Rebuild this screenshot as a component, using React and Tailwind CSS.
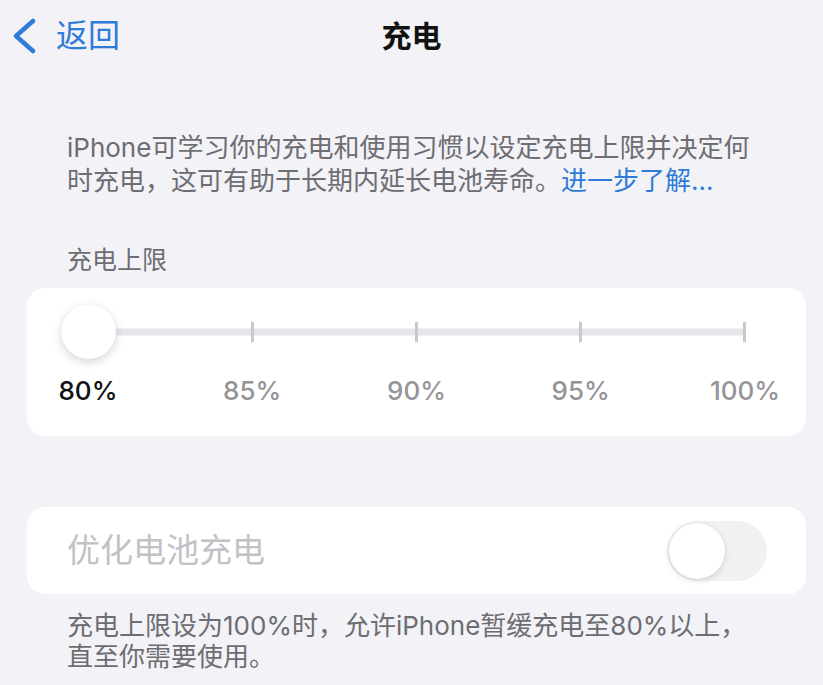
import React from "react"

const FONT = "font-['Inter','Noto_Sans_CJK_SC',sans-serif]"

const Chevron = () => (
  <svg width="26" height="36" viewBox="0 0 26 36" className="shrink-0">
    <path
      d="M21 3 L4 18 L21 33"
      stroke="currentColor"
      strokeWidth="4.5"
      fill="none"
      strokeLinecap="round"
      strokeLinejoin="round"
    />
  </svg>
)

const steps = ["80%", "85%", "90%", "95%", "100%"]

const LimitSlider = () => (
  <div className="rounded-[18px] bg-white px-[21px] pt-[16px] pb-[29px]">
    <div className="relative mx-[13px] h-[55px]">
      {/* track */}
      <div className="absolute inset-x-[27px] top-1/2 h-[7px] -translate-y-1/2 rounded-full bg-[#e5e5ea]" />
      {/* ticks */}
      <div className="absolute inset-x-[26px] top-1/2 flex -translate-y-1/2 items-center justify-between">
        {steps.map((s) => (
          <span key={s} className="h-[21px] w-[3px] rounded-full bg-[#c8c8cd]" />
        ))}
      </div>
      {/* thumb */}
      <div className="absolute left-0 top-0 h-[55px] w-[55px] rounded-full bg-white shadow-[0_3px_10px_rgba(0,0,0,0.16),0_0_1px_rgba(0,0,0,0.08)]" />
    </div>
    <div className="mt-[16px] flex justify-between">
      {steps.map((s, i) => (
        <span
          key={s}
          className={
            "w-[80px] text-center text-[26px] font-medium leading-[32px] " +
            (i === 0 ? "text-[#111111]" : "text-[#949499]")
          }
        >
          {s}
        </span>
      ))}
    </div>
  </div>
)

const Toggle = () => (
  <div className="flex h-[60px] w-[100px] items-center rounded-full bg-[#f1f1f4] p-[2px]">
    <div className="h-[56px] w-[56px] rounded-full bg-white shadow-[0_2px_6px_rgba(0,0,0,0.12),0_0_1px_rgba(0,0,0,0.1)]" />
  </div>
)

export default function App() {
  return (
    <div className={"min-h-screen w-full bg-[#f2f2f7] " + FONT}>
      <header className="grid h-[72px] grid-cols-[1fr_auto_1fr] items-center px-3">
        <div className="flex items-center gap-[18px] text-[#2f7bd8]">
          <Chevron />
          <span className="text-[32px] leading-none">返回</span>
        </div>
        <h1 className="text-[30px] font-semibold leading-none text-[#111111]">充电</h1>
        <div />
      </header>

      <main className="pl-[27px] pr-[17px]">
        <p className="mt-[59px] pl-[40px] text-[26px] leading-[33px] text-[#6d6d72]">
          iPhone可学习你的充电和使用习惯以设定充电上限并决定何
          <br />
          时充电，这可有助于长期内延长电池寿命。
          <span className="text-[#2f7bd8]">进一步了解...</span>
        </p>

        <p className="mt-[48px] mb-[13px] pl-[40px] text-[25px] leading-[30px] text-[#6d6d72]">
          充电上限
        </p>

        <LimitSlider />

        <div className="mt-[71px] flex h-[87px] items-center justify-between rounded-[18px] bg-white pl-[40px] pr-[39px]">
          <span className="text-[33px] leading-none text-[#c2c2c6]">优化电池充电</span>
          <Toggle />
        </div>

        <p className="mt-[16px] pl-[40px] text-[26px] leading-[31px] text-[#6d6d72]">
          充电上限设为100%时，允许iPhone暂缓充电至80%以上，
          <br />
          直至你需要使用。
        </p>
      </main>
    </div>
  )
}
